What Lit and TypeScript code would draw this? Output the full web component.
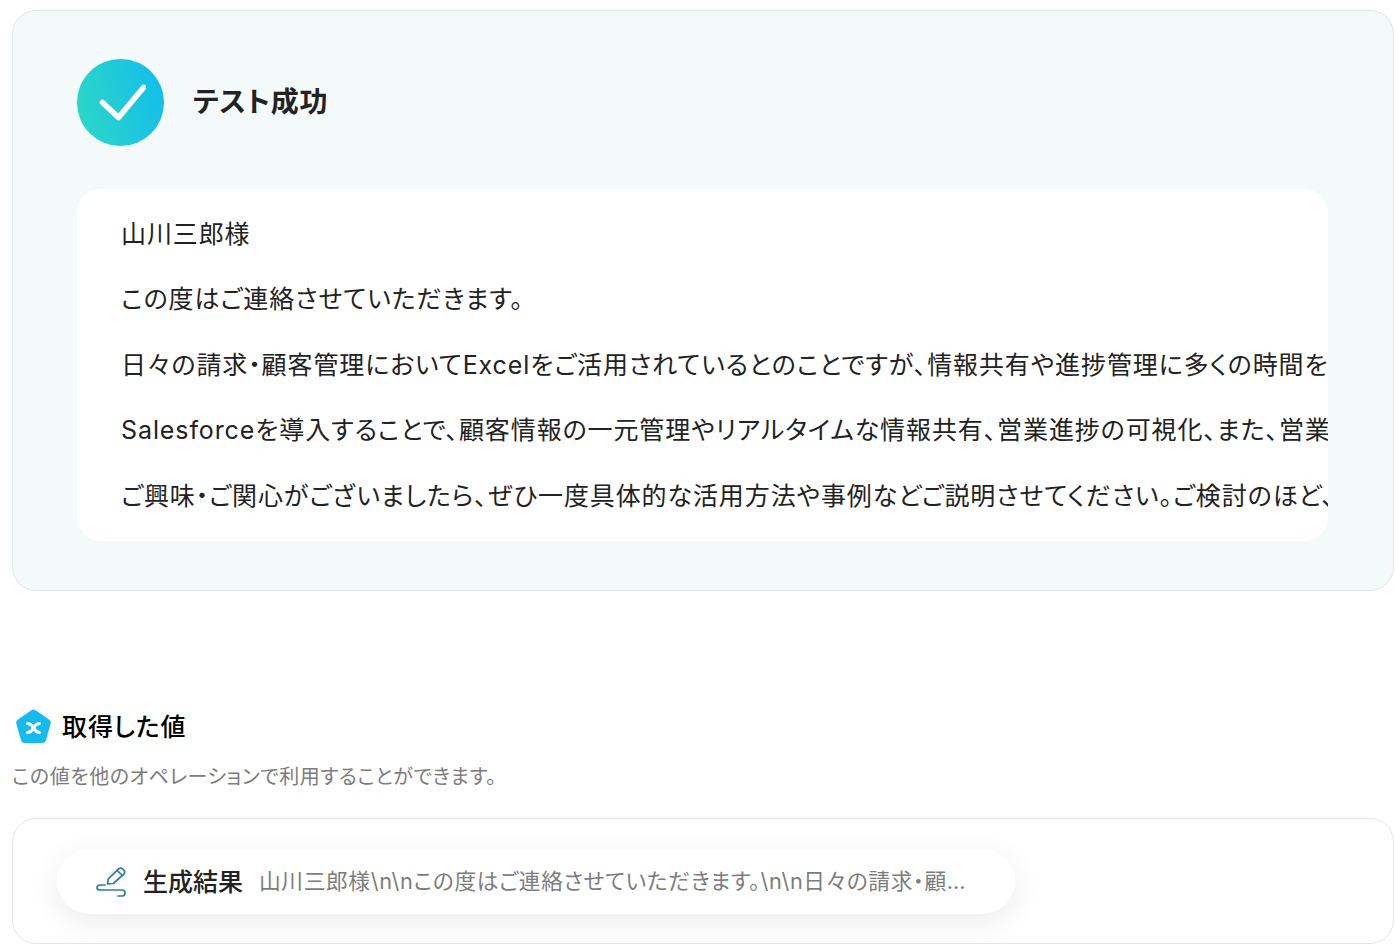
import { LitElement, html, css } from "lit";
import { customElement } from "lit/decorators.js";

const LINES = [
  "山川三郎様",
  "この度はご連絡させていただきます。",
  "日々の請求・顧客管理においてExcelをご活用されているとのことですが、情報共有や進捗管理に多くの時間を",
  "Salesforceを導入することで、顧客情報の一元管理やリアルタイムな情報共有、営業進捗の可視化、また、営業",
  "ご興味・ご関心がございましたら、ぜひ一度具体的な活用方法や事例などご説明させてください。ご検討のほど、",
];

@customElement("app-root")
export class AppRoot extends LitElement {
  static styles = css`
    :host {
      display: block;
      box-sizing: border-box;
      height: 944px;
      overflow: hidden;
      padding: 10px 2px 0 12px;
      background: #fff;
      font-family: Inter, "Noto Sans CJK JP", sans-serif;
      font-feature-settings: "palt";
      color: #222;
    }
    .result {
      box-sizing: border-box;
      height: 581px;
      padding: 48px 65px 49px 64px;
      background: #f4f9f9;
      border: 1px solid #e3e6e8;
      border-radius: 24px;
    }
    .head {
      display: flex;
      align-items: center;
      gap: 29px;
      height: 87px;
    }
    .circle {
      width: 87px;
      height: 87px;
      flex: none;
      border-radius: 50%;
      background: linear-gradient(75deg, #2ed9c3, #12bbee);
      display: flex;
      align-items: center;
      justify-content: center;
    }
    .head h1 {
      margin: 0 0 2px;
      font-size: 28px;
      line-height: 40px;
      font-weight: 700;
      letter-spacing: 0.025em;
      color: #222;
    }
    .body {
      box-sizing: border-box;
      height: 352px;
      margin-top: 43px;
      padding: 27px 0 0 44px;
      background: #fff;
      border-radius: 24px;
      overflow: hidden;
    }
    .body p {
      margin: 0 0 29.4px;
      font-size: 25px;
      line-height: 36px;
      letter-spacing: 0.036em;
      white-space: nowrap;
      color: #222;
    }
    .title-row {
      display: flex;
      align-items: center;
      gap: 10px;
      margin: 118px 0 0 3px;
      height: 36px;
    }
    .title-row h2 {
      margin: 0;
      font-size: 25px;
      font-weight: 500;
      line-height: 36px;
      letter-spacing: 0.035em;
      color: #000;
    }
    .desc {
      margin: 14px 0 0;
      font-size: 20px;
      line-height: 36px;
      letter-spacing: 0.027em;
      color: #7c7c7c;
    }
    .values {
      box-sizing: border-box;
      height: 126px;
      margin-top: 23px;
      padding: 30px 0 0 44px;
      border: 1px solid #e3e6e8;
      border-radius: 24px;
    }
    .pill {
      box-sizing: border-box;
      width: 958px;
      height: 65px;
      display: flex;
      align-items: center;
      padding: 0 48px 4px 38px;
      background: #fff;
      border-radius: 33px;
      box-shadow: 0 8px 30px rgba(0, 0, 0, 0.08);
    }
    .pill svg { flex: none; margin-top: 4px; }
    .label {
      flex: none;
      margin-left: 16px;
      font-size: 25px;
      font-weight: 500;
      letter-spacing: 0;
      color: #222;
    }
    .val {
      margin-left: 16px;
      min-width: 0;
      font-size: 21.7px;
      letter-spacing: 0.03em;
      color: #7c7c7c;
      white-space: nowrap;
      overflow: hidden;
      text-overflow: ellipsis;
    }
  `;

  render() {
    return html`
      <section class="result">
        <div class="head">
          <div class="circle">
            <svg width="50" height="40" viewBox="0 0 50 40" fill="none">
              <path d="M6.500 19.500 L22.500 34.500 L47.500 4.500" stroke="#fff" stroke-width="5.600" stroke-linecap="round" stroke-linejoin="round"/>
            </svg>
          </div>
          <h1>テスト成功</h1>
        </div>
        <div class="body">
          ${LINES.map((l) => html`<p>${l}</p>`)}
        </div>
      </section>
      <div class="title-row">
        <svg width="37" height="36" viewBox="0 0 37 36">
          <path d="M16 1.500a4 4 0 0 1 5 0L34 10.500a4 4 0 0 1 1.600 4.500L31 31a4 4 0 0 1-4 3H10a4 4 0 0 1-4-3L1.400 15a4 4 0 0 1 1.600-4.500Z" fill="#14bbec"/>
          <path d="M12.500 14.500c3.500 0 4.500 2 6 4.500s2.500 4.500 6 4.500M24.500 14.500c-3.500 0-4.500 2-6 4.500s-2.500 4.500-6 4.500" stroke="#fff" stroke-width="3" stroke-linecap="round" fill="none"/>
        </svg>
        <h2>取得した値</h2>
      </div>
      <p class="desc">この値を他のオペレーションで利用することができます。</p>
      <section class="values">
        <div class="pill">
          <svg width="32" height="32" viewBox="0 0 32 32" fill="none" stroke="#2f7f9a" stroke-width="1.700" stroke-linecap="round" stroke-linejoin="round">
            <path d="M12.500 18 L13.300 12.800 L23.500 2.800 Q25.500 1.300 27.300 2.700 L29 4.300 Q30.500 6.200 29 8 L18.200 17.500 Z"/>
            <path d="M22 4.300 L27.500 9.500"/>
            <path d="M10 19 H5 Q2 19.300 2 21.700 Q2 24 5 24 H27.500 Q30 24.300 30 27 Q30 30 27.500 30 H23"/>
          </svg>
          <span class="label">生成結果</span>
          <span class="val">山川三郎様\\n\\nこの度はご連絡させていただきます。\\n\\n日々の請求・顧客管理においてExcelをご活用されているとのことですが</span>
        </div>
      </section>
    `;
  }
}
